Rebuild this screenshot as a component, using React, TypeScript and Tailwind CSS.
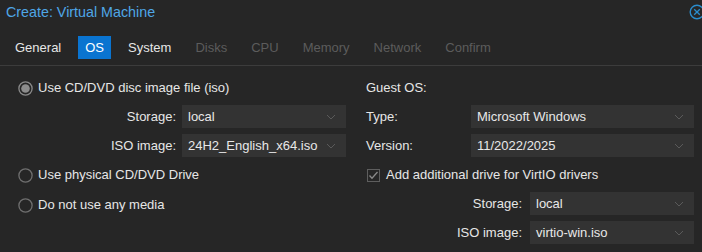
import React from "react";

const Chevron = () => (
  <svg width="10" height="6" viewBox="0 0 10 6" className="shrink-0">
    <polyline points="1,1 5,5 9,1" fill="none" stroke="#5a5a5a" strokeWidth="1" />
  </svg>
);

const Select = ({ value, w }: { value: string; w: string }) => (
  <div className={`${w} h-[23px] bg-[#333333] flex items-center pl-[6px] pr-[10px] justify-between`}>
    <span className="text-[13px] text-[#e8e8e8] leading-none">{value}</span>
    <Chevron />
  </div>
);

const Radio = ({ checked }: { checked?: boolean }) => (
  <svg width="15" height="15" viewBox="0 0 15 15" className="shrink-0">
    <circle cx="7.5" cy="7.5" r="6.6" fill="none" stroke={checked ? "#8a8a8a" : "#6f6f6f"} strokeWidth="1.3" />
    {checked && <circle cx="7.5" cy="7.5" r="4.3" fill="#8c8c8c" />}
  </svg>
);

const tabs = [
  { t: "General", s: "n" },
  { t: "OS", s: "a" },
  { t: "System", s: "n" },
  { t: "Disks", s: "d" },
  { t: "CPU", s: "d" },
  { t: "Memory", s: "d" },
  { t: "Network", s: "d" },
  { t: "Confirm", s: "d" },
];

export default function App() {
  return (
    <div className="w-[702px] h-[252px] bg-[#262626] overflow-hidden font-['Liberation_Sans',Arial,sans-serif] text-[13px] text-[#e6e6e6]">
      <div className="h-[36px] flex items-start">
        <div className="pl-[6px] text-[14.3px] leading-[24px] text-[#4fa6e6]">Create: Virtual Machine</div>
        <svg width="16" height="16" viewBox="0 0 16 16" className="ml-auto mr-[-3px] mt-[4px]">
          <circle cx="8" cy="8" r="6.8" fill="none" stroke="#2a8ccc" strokeWidth="1.4" />
          <line x1="5.2" y1="5.2" x2="10.8" y2="10.8" stroke="#2a8ccc" strokeWidth="1.3" />
          <line x1="10.8" y1="5.2" x2="5.2" y2="10.8" stroke="#2a8ccc" strokeWidth="1.3" />
        </svg>
      </div>
      <div className="h-[30px] border-b border-[#3c3c3c] flex items-start pl-[8px] gap-[10px]">
        {tabs.map((tb) => (
          <div
            key={tb.t}
            className={
              tb.s === "a"
                ? "h-[23px] leading-[23px] px-[7px] bg-[#0a74d0] text-white"
                : tb.s === "n"
                ? "h-[23px] leading-[23px] px-[7px] text-[#e6e6e6]"
                : "h-[23px] leading-[23px] px-[7px] text-[#5c5c5c]"
            }
          >
            {tb.t}
          </div>
        ))}
      </div>
      <div className="flex">
        <div className="w-[351px] flex flex-col pt-[11px]">
          <div className="h-[22px] flex items-center pl-[18px] gap-[5px]">
            <Radio checked />
            <span>Use CD/DVD disc image file (iso)</span>
          </div>
          <div className="mt-[6px] flex items-center gap-[6px]">
            <div className="w-[176px] text-right">Storage:</div>
            <Select value="local" w="w-[164px]" />
          </div>
          <div className="mt-[6px] flex items-center gap-[6px]">
            <div className="w-[176px] text-right">ISO image:</div>
            <Select value="24H2_English_x64.iso" w="w-[164px]" />
          </div>
          <div className="mt-[7px] h-[22px] flex items-center pl-[18px] gap-[5px]">
            <Radio />
            <span>Use physical CD/DVD Drive</span>
          </div>
          <div className="mt-[8px] h-[22px] flex items-center pl-[18px] gap-[5px]">
            <Radio />
            <span>Do not use any media</span>
          </div>
        </div>
        <div className="flex-1 flex flex-col pt-[11px] pl-[15px]">
          <div className="h-[22px] flex items-center">Guest OS:</div>
          <div className="mt-[6px] flex items-center">
            <div className="w-[105px]">Type:</div>
            <Select value="Microsoft Windows" w="w-[223px]" />
          </div>
          <div className="mt-[6px] flex items-center">
            <div className="w-[105px]">Version:</div>
            <Select value="11/2022/2025" w="w-[223px]" />
          </div>
          <div className="mt-[7px] h-[22px] flex items-center gap-[6px] pl-[1px]">
            <svg width="13" height="13" viewBox="0 0 13 13" className="shrink-0">
              <rect x="0.5" y="0.5" width="12" height="12" fill="none" stroke="#5e5e5e" strokeWidth="1" />
              <polyline points="2.5,6.5 5,9.2 10.5,3" fill="none" stroke="#8a8a8a" strokeWidth="1.3" />
            </svg>
            <span>Add additional drive for VirtIO drivers</span>
          </div>
          <div className="mt-[6px] flex items-center gap-[8px]">
            <div className="w-[156px] text-right">Storage:</div>
            <Select value="local" w="w-[164px]" />
          </div>
          <div className="mt-[6px] flex items-center gap-[8px]">
            <div className="w-[156px] text-right">ISO image:</div>
            <Select value="virtio-win.iso" w="w-[164px]" />
          </div>
        </div>
      </div>
    </div>
  );
}
